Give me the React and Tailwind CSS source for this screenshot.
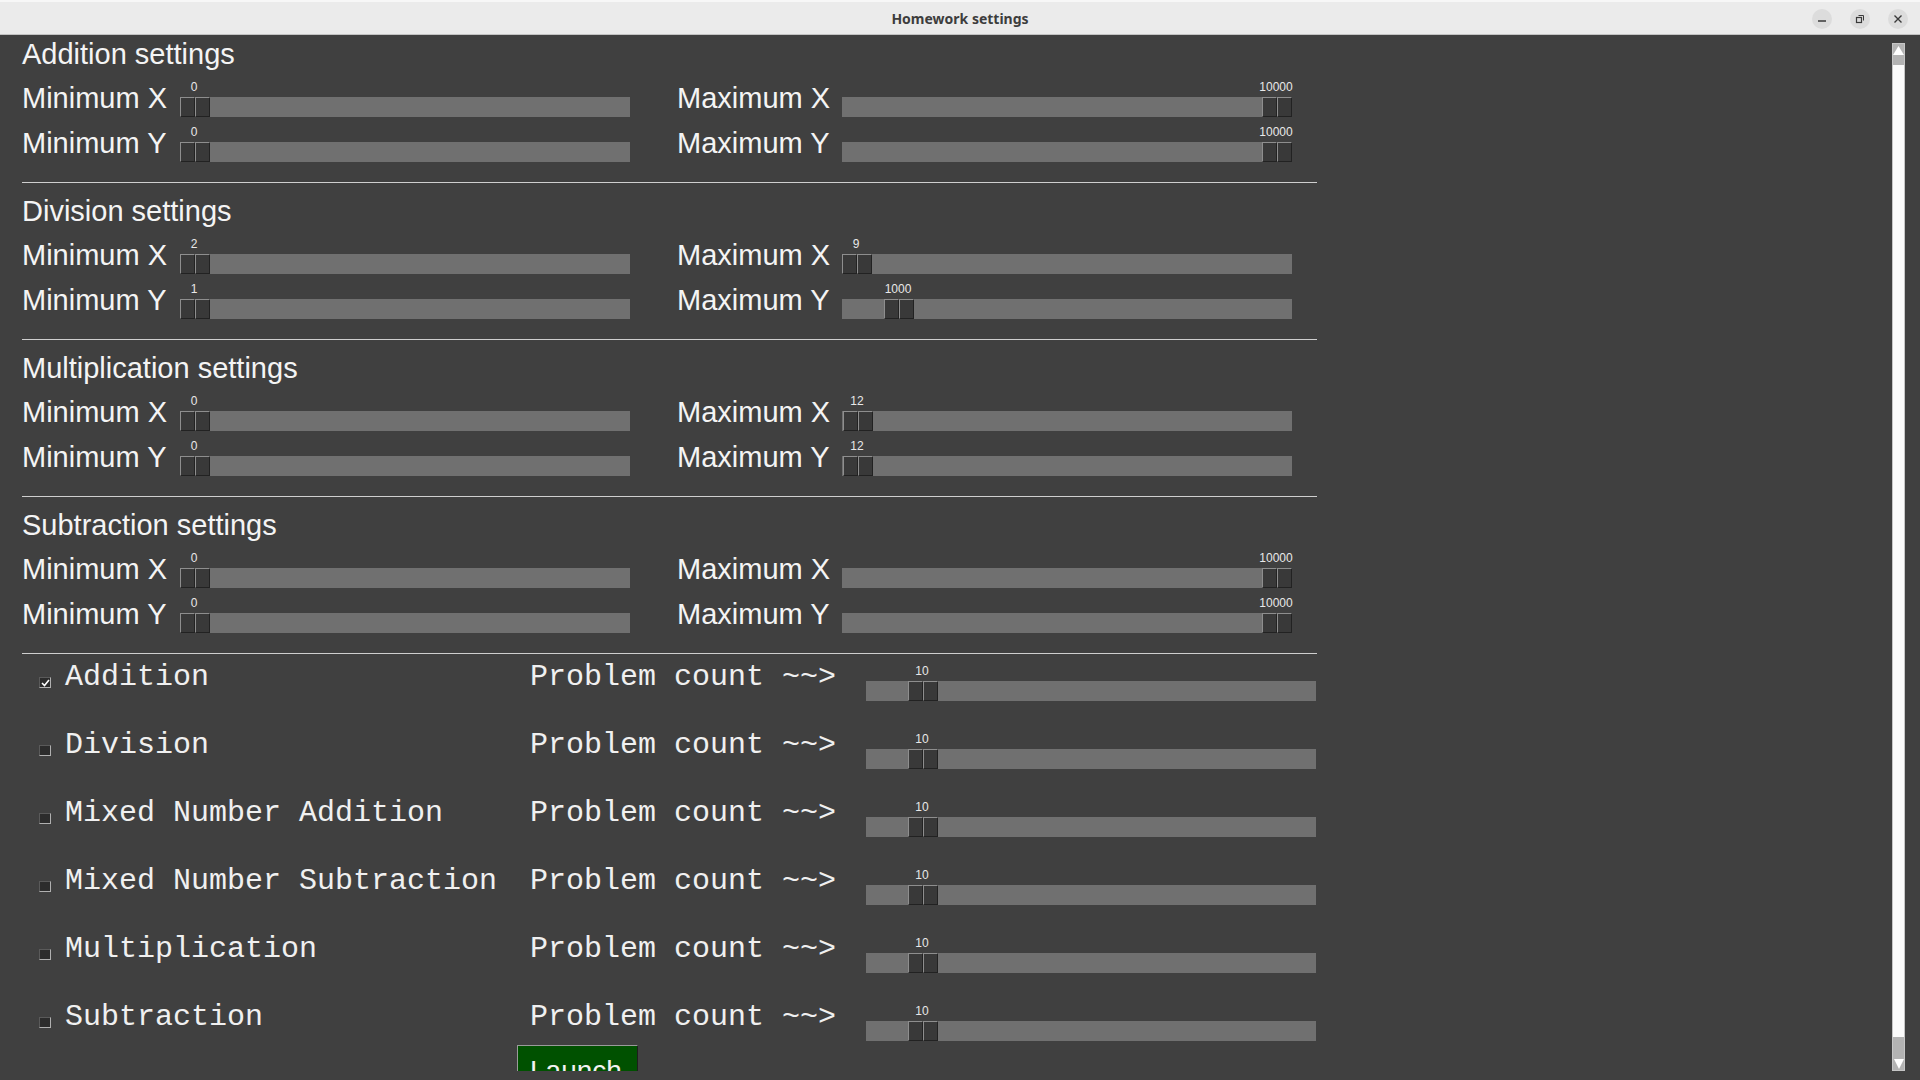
import React from "react";

const sections = [
  {
    title: "Addition settings",
    rows: [
      [{ label: "Minimum X", value: 0 }, { label: "Maximum X", value: 10000 }],
      [{ label: "Minimum Y", value: 0 }, { label: "Maximum Y", value: 10000 }],
    ],
  },
  {
    title: "Division settings",
    rows: [
      [{ label: "Minimum X", value: 2 }, { label: "Maximum X", value: 9 }],
      [{ label: "Minimum Y", value: 1 }, { label: "Maximum Y", value: 1000 }],
    ],
  },
  {
    title: "Multiplication settings",
    rows: [
      [{ label: "Minimum X", value: 0 }, { label: "Maximum X", value: 12 }],
      [{ label: "Minimum Y", value: 0 }, { label: "Maximum Y", value: 12 }],
    ],
  },
  {
    title: "Subtraction settings",
    rows: [
      [{ label: "Minimum X", value: 0 }, { label: "Maximum X", value: 10000 }],
      [{ label: "Minimum Y", value: 0 }, { label: "Maximum Y", value: 10000 }],
    ],
  },
];

const problems = [
  { name: "Addition", checked: true },
  { name: "Division" },
  { name: "Mixed Number Addition" },
  { name: "Mixed Number Subtraction" },
  { name: "Multiplication" },
  { name: "Subtraction" },
];

const HandleHalf = () => (
  <span className="block h-full w-[15px] border border-t-[#8e8e8e] border-l-[#8e8e8e] border-b-[#222222] border-r-[#222222] bg-[#393939]" />
);

const Slider = ({ value, max }) => {
  // tk scale: handle travels over track width minus its own 30px
  const left = Math.round((value / max) * 420);
  return (
    <div className="flex w-[450px] flex-col">
      <div className="relative h-[25px]">
        <div className="absolute top-[9px] flex w-[28px] justify-center" style={{ left }}>
          <span className="whitespace-nowrap text-[12px] leading-[12px] text-[#e8e8e8]">{value}</span>
        </div>
      </div>
      <div className="relative h-[20px] bg-[#707070]">
        <div className="absolute top-0 flex h-[20px] w-[30px]" style={{ left }}>
          <HandleHalf />
          <HandleHalf />
        </div>
      </div>
    </div>
  );
};

const labelText = "text-[29px] leading-[34px] text-[#f4f4f4]";

const Section = ({ section, first }) => (
  <div className="pb-[20px]">
    {!first && <div className="h-px w-[1295px] bg-[#cfcfcf]" />}
    <div className={`${first ? "" : "mt-[11px]"} h-[35px] ${labelText}`}>{section.title}</div>
    {section.rows.map((row, i) => (
      <div key={i} className="flex h-[45px] items-start">
        <div className={`mt-[9px] w-[158px] ${labelText}`}>{row[0].label}</div>
        <Slider value={row[0].value} max={10000} />
        <div className={`ml-[47px] mt-[9px] w-[165px] ${labelText}`}>{row[1].label}</div>
        <Slider value={row[1].value} max={10000} />
      </div>
    ))}
  </div>
);

const Checkbox = ({ checked }) => (
  <div className="mt-[21px] flex h-[11px] w-[12px] items-center justify-center border border-t-[#5a5a5a] border-l-[#5a5a5a] border-b-[#b0b0b0] border-r-[#b0b0b0] bg-[#2c2c2c]">
    {checked && (
      <svg width="9" height="8" viewBox="0 0 9 8">
        <path d="M1 4 L3.5 6.5 L8 1" fill="none" stroke="#ffffff" strokeWidth="1.6" />
      </svg>
    )}
  </div>
);

const TitleBar = () => (
  <div className="relative flex h-[35px] shrink-0 items-center justify-center border-b border-b-[#c2c2c2] border-t-2 border-t-[#f7f7f7] bg-[#ebebeb]">
    <span className="font-['Noto_Sans',sans-serif] text-[14px] font-bold text-[#3d3d3d]">Homework settings</span>
    <div className="absolute right-[12px] top-[7px] flex gap-[18px]">
      <span className="flex h-[20px] w-[20px] items-center justify-center rounded-full bg-[#dcdcdc]">
        <svg width="10" height="10" viewBox="0 0 10 10">
          <path d="M1 7 H9" stroke="#3a3a3a" strokeWidth="1.5" />
        </svg>
      </span>
      <span className="flex h-[20px] w-[20px] items-center justify-center rounded-full bg-[#dcdcdc]">
        <svg width="10" height="10" viewBox="0 0 10 10">
          <rect x="1.5" y="3.5" width="5" height="5" fill="none" stroke="#3a3a3a" strokeWidth="1.2" />
          <path d="M3.5 1.5 H8.5 V6.5" fill="none" stroke="#3a3a3a" strokeWidth="1" />
        </svg>
      </span>
      <span className="flex h-[20px] w-[20px] items-center justify-center rounded-full bg-[#dcdcdc]">
        <svg width="10" height="10" viewBox="0 0 10 10">
          <path d="M1.5 1.5 L8.5 8.5 M8.5 1.5 L1.5 8.5" stroke="#3a3a3a" strokeWidth="1.4" />
        </svg>
      </span>
    </div>
  </div>
);

const Scrollbar = () => (
  <div className="mr-[15px] mt-[8px] flex w-[13px] flex-col border border-[#c6c6c6] bg-[#b3b3b3]">
    <div className="flex h-[21px] justify-center pt-[2px]">
      <svg width="11" height="9" viewBox="0 0 11 9">
        <polygon points="5.5,0 11,9 0,9" fill="#ffffff" />
      </svg>
    </div>
    <div className="flex-1 bg-[#fbfbfb]" />
    <div className="flex h-[33px] items-end justify-center pb-[1px]">
      <svg width="10" height="10" viewBox="0 0 10 10">
        <polygon points="0,0 10,0 5,10" fill="#ffffff" />
      </svg>
    </div>
  </div>
);

const mono = "whitespace-pre font-['Liberation_Mono',monospace] text-[30px] leading-[34px] text-[#f0f0f0]";

export default function App() {
  return (
    <div className="flex h-[1080px] w-[1920px] flex-col overflow-hidden bg-[#404040] font-['Liberation_Sans',Arial,sans-serif]">
      <TitleBar />
      <div className="flex h-[1036px] shrink-0">
        <main className="flex-1 overflow-hidden pl-[22px] pt-[2px]">
          {sections.map((s, i) => (
            <Section key={s.title} section={s} first={i === 0} />
          ))}
          <div className="h-px w-[1295px] bg-[#cfcfcf]" />
          <div className="mt-[2px] flex flex-col gap-[23px]">
            {problems.map((p) => (
              <div key={p.name} className="flex h-[45px] items-start">
                <div className="ml-[17px]">
                  <Checkbox checked={p.checked} />
                </div>
                <div className={`ml-[14px] mt-[4px] w-[465px] ${mono}`}>{p.name}</div>
                <div className={`mt-[4px] w-[336px] ${mono}`}>Problem count ~~&gt;</div>
                <Slider value={10} max={100} />
              </div>
            ))}
          </div>
          <button className="ml-[495px] mt-[4px] h-[48px] w-[121px] border border-t-[#9a9a9a] border-l-[#9a9a9a] border-b-[#1e1e1e] border-r-[#1e1e1e] bg-[#005100] pl-[12px] pt-[4px] text-left text-[28px] leading-[34px] text-[#f2f2f2]">
            Launch
          </button>
        </main>
        <Scrollbar />
      </div>
      <div className="flex-1 bg-[#404040]" />
    </div>
  );
}
